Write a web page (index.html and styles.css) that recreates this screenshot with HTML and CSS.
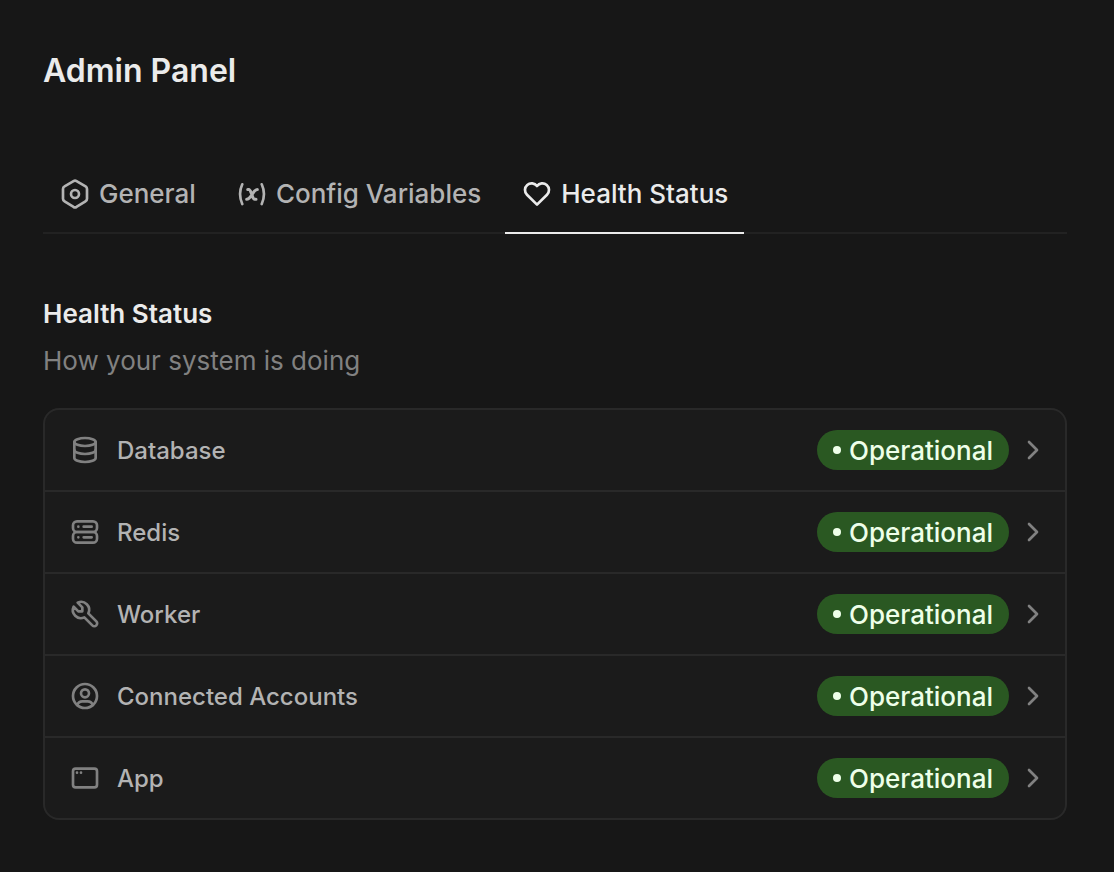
FILE: index.html
```
<!DOCTYPE html>
<html lang="en">
<head>
  <meta charset="UTF-8" />
  <meta name="viewport" content="width=device-width, initial-scale=1.0" />
  <title>Admin Panel - Health Status</title>
  <link rel="stylesheet" href="styles.css">
</head>
<body>
  <main class="page">
    <h1 class="page-title">Admin Panel</h1>

    <nav class="tabs">
      <a class="tab" href="#general">
        <svg class="icon" viewBox="0 0 24 24"><path d="M19.875 6.27a2.225 2.225 0 0 1 1.125 1.948v7.284c0 .809 -.443 1.555 -1.158 1.948l-6.75 4.27a2.269 2.269 0 0 1 -2.184 0l-6.75 -4.27a2.225 2.225 0 0 1 -1.158 -1.948v-7.285c0 -.809 .443 -1.554 1.158 -1.947l6.75 -3.98a2.33 2.33 0 0 1 2.25 0l6.75 3.98h.033z" /><circle cx="12" cy="12" r="3" /></svg>
        General
      </a>
      <a class="tab" href="#config-variables">
        <svg class="icon" viewBox="0 0 24 24"><path d="M4.7 4.7c-2.2 4.8 -2.2 9.8 0 14.8m14.6 -14.8c2.2 4.8 2.2 9.8 0 14.8" /><path stroke-width="2.3" d="M8.8 8.6h.8c1 0 1.2 1 2.2 3.7c1 2.6 1.2 3.7 2.2 3.7h1M8 16c1.5 0 3 -2 4 -3.6s2.5 -3.8 4 -3.8" /></svg>
        Config Variables
      </a>
      <a class="tab active" href="#health-status" aria-current="page">
        <svg class="icon" viewBox="0 0 24 24"><path d="M19.5 12.572l-7.5 7.428l-7.5 -7.428a5 5 0 1 1 7.5 -6.566a5 5 0 1 1 7.5 6.572" /></svg>
        Health Status
      </a>
    </nav>

    <section>
      <h2 class="section-title">Health Status</h2>
      <p class="section-text">How your system is doing</p>

      <div class="card">
        <a class="row" href="#database">
          <svg class="icon" viewBox="0 0 24 24"><ellipse cx="12" cy="6" rx="8" ry="3" /><path d="M4 6v6a8 3 0 0 0 16 0v-6" /><path d="M4 12v6a8 3 0 0 0 16 0v-6" /></svg>
          <span class="row-label">Database</span>
          <span class="status">Operational</span>
          <svg class="icon" viewBox="0 0 24 24"><path d="M9 6l6 6l-6 6" /></svg>
        </a>
        <a class="row" href="#redis">
          <svg class="icon" viewBox="0 0 24 24"><rect x="3" y="4" width="18" height="8" rx="3" /><rect x="3" y="12" width="18" height="8" rx="3" /><path d="M7 8v.01M7 16v.01M11 8h6M11 16h6" /></svg>
          <span class="row-label">Redis</span>
          <span class="status">Operational</span>
          <svg class="icon" viewBox="0 0 24 24"><path d="M9 6l6 6l-6 6" /></svg>
        </a>
        <a class="row" href="#worker">
          <svg class="icon" viewBox="0 0 24 24"><path d="M7 10h3v-3l-3.5 -3.5a6 6 0 0 1 8 8l6 6a2 2 0 0 1 -3 3l-6 -6a6 6 0 0 1 -8 -8l3.5 3.5" /></svg>
          <span class="row-label">Worker</span>
          <span class="status">Operational</span>
          <svg class="icon" viewBox="0 0 24 24"><path d="M9 6l6 6l-6 6" /></svg>
        </a>
        <a class="row" href="#connected-accounts">
          <svg class="icon" viewBox="0 0 24 24"><circle cx="12" cy="12" r="9" /><circle cx="12" cy="10" r="3" /><path d="M6.168 18.849a4 4 0 0 1 3.832 -2.849h4a4 4 0 0 1 3.834 2.855" /></svg>
          <span class="row-label">Connected Accounts</span>
          <span class="status">Operational</span>
          <svg class="icon" viewBox="0 0 24 24"><path d="M9 6l6 6l-6 6" /></svg>
        </a>
        <a class="row" href="#app">
          <svg class="icon" viewBox="0 0 24 24"><rect x="3" y="5" width="18" height="14" rx="2" /><path d="M6 8h.01M9 8h.01" /></svg>
          <span class="row-label">App</span>
          <span class="status">Operational</span>
          <svg class="icon" viewBox="0 0 24 24"><path d="M9 6l6 6l-6 6" /></svg>
        </a>
      </div>
    </section>
  </main>
</body>
</html>
```
FILE: styles.css
```
* {
  box-sizing: border-box;
}

body {
  margin: 0;
  font-family: Inter, sans-serif;
  font-size: 26px;
  background-color: #171717;
  color: #ebebeb;
}

a {
  color: inherit;
  text-decoration: none;
}

.page {
  padding: 51px 47px 50px 43px;
}

.page-title {
  margin: 0 0 63px;
  font-size: 32px;
  line-height: 40px;
  font-weight: 600;
}

.icon {
  width: 32px;
  height: 32px;
  flex-shrink: 0;
  fill: none;
  stroke: currentColor;
  stroke-width: 2;
  stroke-linecap: round;
  stroke-linejoin: round;
}

/* Tabs */
.tabs {
  display: flex;
  gap: 8px;
  height: 80px;
  margin-bottom: 60px;
  box-shadow: inset 0 -2px #222;
}

.tab {
  display: flex;
  align-items: center;
  gap: 8px;
  padding: 0 16px;
  line-height: 30px;
  font-weight: 500;
  color: #b3b3b3;
}

.tab.active {
  color: #ebebeb;
  box-shadow: inset 0 -2px #ebebeb;
}

/* Health status */
.section-title {
  margin: 0 0 8px;
  font-size: 26px;
  line-height: 40px;
  font-weight: 600;
}

.section-text {
  margin: 0 0 28px;
  line-height: 38px;
  color: #818181;
}

.card {
  border: 2px solid #292929;
  border-radius: 16px;
  background-color: #1b1b1b;
  overflow: hidden;
}

.row {
  display: flex;
  align-items: center;
  height: 80px;
  padding: 0 16px 0 24px;
  color: #818181;
}

.row + .row {
  height: 82px;
  border-top: 2px solid #292929;
}

.row-label {
  flex: 1;
  margin-left: 16px;
  font-size: 24px;
  font-weight: 500;
  color: #b3b3b3;
}

.status {
  display: flex;
  align-items: center;
  gap: 8px;
  height: 40px;
  margin-right: 8px;
  padding: 0 16px;
  border-radius: 20px;
  font-weight: 500;
  background-color: #2a5822;
  color: #eeffe9;
}

.status::before {
  content: "";
  width: 8px;
  height: 8px;
  border-radius: 50%;
  background-color: #eeffe9;
}
```
